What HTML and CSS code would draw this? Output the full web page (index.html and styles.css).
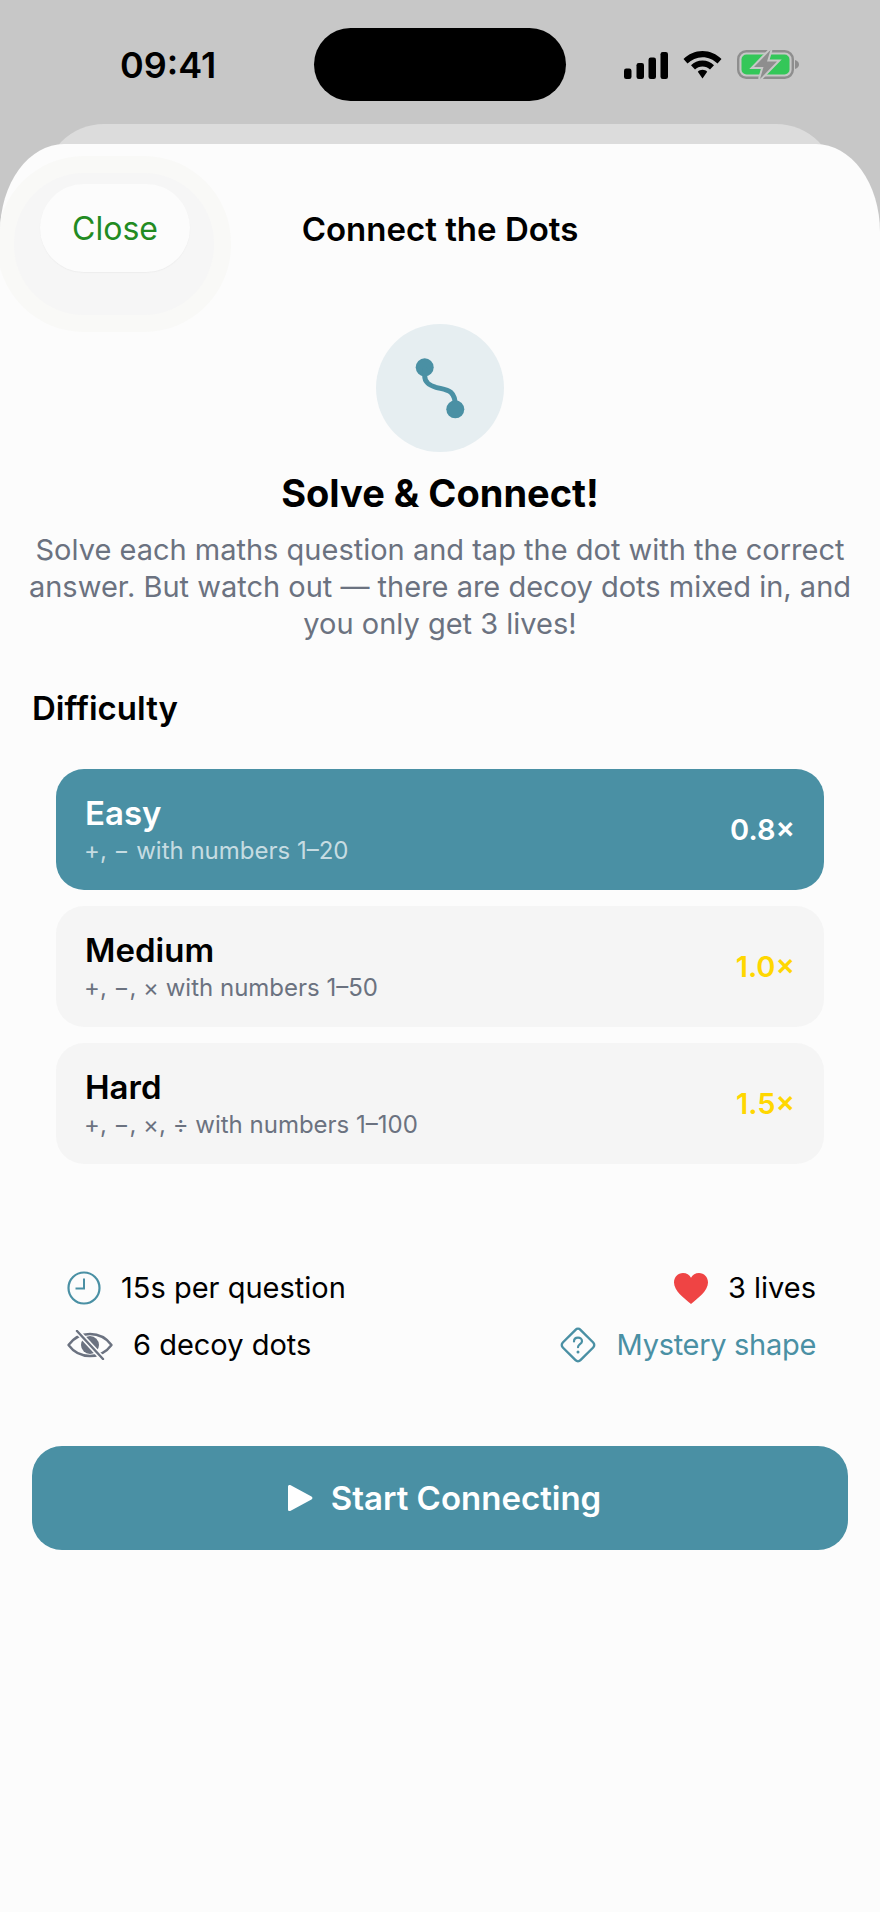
FILE: index.html
```html
<!DOCTYPE html>
<html lang="en">
<head>
<meta charset="utf-8">
<title>Connect the Dots</title>
<link rel="stylesheet" href="styles.css">
</head>
<body>
<div class="status">
  <span class="time">09:41</span>
  <div class="island"></div>
  <div class="status-icons">
    <svg class="signal" width="44" height="27" viewBox="0 0 44 27"><rect x="0" y="16.5" width="7.5" height="10.5" rx="2.2"/><rect x="12.5" y="11" width="7.5" height="16" rx="2.2"/><rect x="24.5" y="5.5" width="7.5" height="21.5" rx="2.2"/><rect x="36.5" y="0" width="7.5" height="27" rx="2.2"/></svg>
    <svg class="wifi" width="39" height="28" viewBox="0 0 39 28"><path d="M19.500 0C27 0 33.500 3 38.500 8L34.500 12.500C30.500 8.500 25.300 6.200 19.500 6.200S8.500 8.500 4.500 12.500L.5 8C5.500 3 12 0 19.500 0Z"/><path d="M19.500 9.500C24 9.500 28 11.200 31 14.200L27 18.600C25 16.700 22.400 15.600 19.500 15.600S14 16.700 12 18.600L8 14.200C11 11.200 15 9.500 19.500 9.500Z"/><path d="M19.500 18.800C21.300 18.800 23 19.500 24.200 20.700L19.500 27.500L14.800 20.700C16 19.500 17.700 18.800 19.500 18.800Z"/></svg>
    <svg class="battery" width="63" height="30" viewBox="0 0 63 30"><rect x="1.200" y="1.200" width="54.600" height="26.600" rx="8" fill="none" stroke="#8e8e8e" stroke-width="2.400"/><rect x="4.500" y="4.500" width="48" height="20" rx="5" fill="#34c759"/><path d="M58 10c2.500.6 4 2.400 4 4.500s-1.500 3.900-4 4.500z" fill="#8e8e8e"/><path d="M33.500 0L17 17h9.500l-3.500 12L40 11.500H30z" fill="#8e8e8e" stroke="#c7c7c7" stroke-width="4" paint-order="stroke"/></svg>
  </div>
</div>
<div class="back-card"></div>
<main class="sheet">
  <div class="halo"></div>
  <header class="nav">
    <button class="close">Close</button>
    <h1 class="nav-title">Connect the Dots</h1>
  </header>
  <section class="intro">
    <div class="badge">
      <svg width="128" height="128" viewBox="0 0 128 128"><circle cx="48.700" cy="43.300" r="9" fill="#4a90a4"/><circle cx="79.300" cy="85.300" r="9" fill="#4a90a4"/><path d="M48.700 45V52C48.700 59 54 61.500 60 63.300C70 66 79.300 65 79.300 82" fill="none" stroke="#4a90a4" stroke-width="5" stroke-linecap="round"/></svg>
    </div>
    <h2 class="headline">Solve &amp; Connect!</h2>
    <p class="lead">Solve each maths question and tap the dot with the correct answer. But watch out — there are decoy dots mixed in, and you only get 3 lives!</p>
  </section>
  <h3 class="section-title">Difficulty</h3>
  <div class="levels">
    <div class="level level-active">
      <div class="level-text"><div class="level-name">Easy</div><div class="level-desc">+, − with numbers 1–20</div></div>
      <span class="level-mult">0.8×</span>
    </div>
    <div class="level">
      <div class="level-text"><div class="level-name">Medium</div><div class="level-desc">+, −, × with numbers 1–50</div></div>
      <span class="level-mult">1.0×</span>
    </div>
    <div class="level">
      <div class="level-text"><div class="level-name">Hard</div><div class="level-desc">+, −, ×, ÷ with numbers 1–100</div></div>
      <span class="level-mult">1.5×</span>
    </div>
  </div>
  <div class="facts">
    <div class="fact-row">
      <div class="fact fact-clock">
        <svg width="34" height="34" viewBox="0 0 34 34"><circle cx="17" cy="17" r="15.500" fill="none" stroke="#4a90a4" stroke-width="2.200"/><path d="M17 7.500V17.500H8.500" fill="none" stroke="#4a90a4" stroke-width="2"/></svg>
        <span>15s per question</span>
      </div>
      <div class="fact fact-heart">
        <svg width="34" height="31" viewBox="0 0 34 31"><path d="M17 31C10 25 0 18 0 9.500 0 4 4 0 9 0c3.500 0 6.500 1.800 8 4.800C18.500 1.800 21.500 0 25 0c5 0 9 4 9 9.500C34 18 24 25 17 31z" fill="#ef4444"/></svg>
        <span>3 lives</span>
      </div>
    </div>
    <div class="fact-row">
      <div class="fact fact-eye">
        <svg width="46" height="30" viewBox="0 0 46 30"><path d="M1.500 15C7 7.500 14.500 4 23 4s16 3.500 21.500 11C39 22.500 31.500 26 23 26S7 22.500 1.500 15z" fill="none" stroke="#6b7280" stroke-width="2.400" stroke-linejoin="round"/><circle cx="23" cy="15" r="9" fill="#6b7280"/><path d="M10 1L36 29" stroke="#fcfcfc" stroke-width="5.500"/><path d="M10 1L36 29" stroke="#6b7280" stroke-width="2.400" stroke-linecap="round"/></svg>
        <span>6 decoy dots</span>
      </div>
      <div class="fact fact-mystery">
        <svg width="38" height="38" viewBox="0 0 38 38"><rect x="6.500" y="6.500" width="25" height="25" rx="3.500" transform="rotate(45 19 19)" fill="none" stroke="#4a90a4" stroke-width="2.400"/><path d="M15 15.500c0-2.400 1.800-3.800 4-3.800s4 1.400 4 3.500c0 3-4 3-4 6" fill="none" stroke="#4a90a4" stroke-width="2.200" stroke-linecap="round"/><circle cx="19" cy="26" r="1.500" fill="#4a90a4"/></svg>
        <span>Mystery shape</span>
      </div>
    </div>
  </div>
  <button class="start">
    <svg width="26" height="28" viewBox="0 0 26 28"><path d="M1 2.500C1 1 2.500.4 3.700 1.300L24.500 12.500c1.300.8 1.300 2.200 0 3L3.700 26.700C2.500 27.600 1 27 1 25.500z" fill="#fff"/></svg>
    <span>Start Connecting</span>
  </button>
</main>
</body>
</html>
```
FILE: styles.css
```css
* { box-sizing: border-box; }
html, body { margin: 0; padding: 0; }
body {
  width: 880px;
  height: 1912px;
  overflow: hidden;
  background: #c7c7c7;
  font-family: Inter, "Liberation Sans", sans-serif;
  color: #000;
}
.status {
  height: 124px;
  padding-top: 28px;
  position: relative;
}
.time {
  position: absolute;
  left: 120px;
  top: 45px;
  font-size: 36px;
  line-height: 40px;
  font-weight: 600;
}
.island {
  width: 252px;
  height: 73px;
  margin: 0 auto;
  border-radius: 37px;
  background: #000;
}
.status-icons {
  position: absolute;
  left: 624px;
  top: 50px;
  display: flex;
  align-items: center;
  gap: 15px;
}
.back-card {
  height: 60px;
  margin: 0 44px;
  border-radius: 64px 64px 0 0;
  background: #dcdcdc;
}
.sheet {
  position: relative;
  height: 1768px;
  margin-top: -40px;
  padding: 40px 32px 0;
  border-radius: 64px 64px 0 0 / 88px 88px 0 0;
  background: #fcfcfc;
  overflow: hidden;
}
.halo {
  position: absolute;
  left: 14px;
  top: 29px;
  width: 200px;
  height: 142px;
  border-radius: 70px;
  background: #f6f6f6;
  box-shadow: 0 0 0 17px #f9f9f7;
}
.nav {
  position: relative;
  height: 88px;
}
.close {
  position: absolute;
  left: 8px;
  top: 0;
  width: 150px;
  height: 88px;
  border: 0;
  border-radius: 44px;
  background: #fcfcfc;
  box-shadow: 0 1px 1px #eeeeee;
  color: #228b22;
  font: 400 32px/88px Inter, "Liberation Sans", sans-serif;
}
.nav-title {
  margin: 0;
  text-align: center;
  font-size: 33px;
  line-height: 90px;
  font-weight: 600;
}
.intro {
  display: flex;
  flex-direction: column;
  align-items: center;
  margin-top: 52px;
}
.badge {
  width: 128px;
  height: 128px;
  border-radius: 50%;
  background: #e6eef1;
}
.headline {
  margin: 19px 0 0;
  font-size: 38px;
  line-height: 44px;
  font-weight: 700;
}
.lead {
  margin: 16px -14px 0;
  text-align: center;
  color: #6b7280;
  font-size: 29px;
  line-height: 37px;
}
.section-title {
  margin: 46px 0 0;
  font-size: 33px;
  line-height: 40px;
  font-weight: 600;
}
.levels {
  display: flex;
  flex-direction: column;
  gap: 16px;
  margin: 41px 24px 0;
}
.level {
  display: flex;
  align-items: center;
  justify-content: space-between;
  height: 121px;
  padding: 0 29px;
  border-radius: 28px;
  background: #f5f5f5;
}
.level-active {
  background: #4a90a4;
  color: #fff;
}
.level-name {
  font-size: 33px;
  line-height: 38px;
  font-weight: 600;
}
.level-desc {
  margin: 4px 0 0 -1px;
  color: #6b7280;
  font-size: 24px;
  line-height: 30px;
}
.level-active .level-desc { color: rgba(255, 255, 255, 0.7); }
.level-mult {
  color: #ffd700;
  font-size: 29px;
  font-weight: 600;
}
.level-active .level-mult { color: #fff; }
.facts {
  display: flex;
  flex-direction: column;
  gap: 21px;
  margin-top: 106px;
  padding: 0 32px 0 35px;
}
.fact-row {
  display: flex;
  justify-content: space-between;
  align-items: center;
  height: 36px;
}
.fact {
  display: flex;
  align-items: center;
  gap: 20px;
  font-size: 29px;
  line-height: 36px;
}
.fact-mystery {
  color: #4a90a4;
  letter-spacing: -0.3px;
}
.start {
  display: flex;
  align-items: center;
  justify-content: center;
  gap: 18px;
  width: 816px;
  height: 104px;
  margin-top: 83px;
  padding: 0 0 0 8px;
  border: 0;
  border-radius: 30px;
  background: #4a90a4;
  color: #fff;
  font: 600 33px/40px Inter, "Liberation Sans", sans-serif;
}
```
